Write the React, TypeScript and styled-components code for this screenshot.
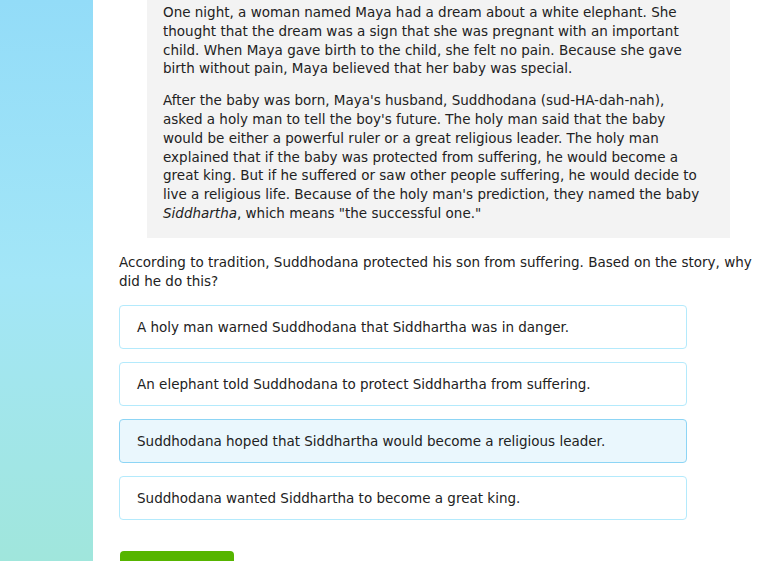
import React, { useState } from "react"
import styled, { createGlobalStyle } from "styled-components"

const GlobalStyle = createGlobalStyle`
  html, body {
    margin: 0;
    padding: 0;
    background: #fff;
    overflow: hidden;
  }
  body {
    font-family: "DejaVu Sans", Verdana, sans-serif;
    color: #222;
  }
`

const choices = [
  "A holy man warned Suddhodana that Siddhartha was in danger.",
  "An elephant told Suddhodana to protect Siddhartha from suffering.",
  "Suddhodana hoped that Siddhartha would become a religious leader.",
  "Suddhodana wanted Siddhartha to become a great king.",
]

const App = () => {
  const [picked, setPicked] = useState(2)
  return (
    <>
      <GlobalStyle />
      <Page>
        <Sidebar />
        <Main>
          <Passage>
            <p>
              One night, a woman named Maya had a dream about a white elephant. She
              thought that the dream was a sign that she was pregnant with an important
              child. When Maya gave birth to the child, she felt no pain. Because she gave
              birth without pain, Maya believed that her baby was special.
            </p>
            <p>
              After the baby was born, Maya's husband, Suddhodana (sud-HA-dah-nah),
              asked a holy man to tell the boy's future. The holy man said that the baby
              would be either a powerful ruler or a great religious leader. The holy man
              explained that if the baby was protected from suffering, he would become a
              great king. But if he suffered or saw other people suffering, he would decide to
              live a religious life. Because of the holy man's prediction, they named the baby{" "}
              <em>Siddhartha</em>, which means "the successful one."
            </p>
          </Passage>
          <Question>
            According to tradition, Suddhodana protected his son from suffering. Based on the story, why
            did he do this?
          </Question>
          <Choices>
            {choices.map((c, i) => (
              <Choice key={c} $selected={i === picked} onClick={() => setPicked(i)}>
                {c}
              </Choice>
            ))}
          </Choices>
          <SubmitButton>Submit</SubmitButton>
        </Main>
      </Page>
    </>
  )
}

const Page = styled.div`
  display: flex;
  height: 561px;
  overflow: hidden;
`

const Sidebar = styled.div`
  flex: 0 0 93px;
  background: linear-gradient(180deg, #93dcf8 0%, #a3e6f7 50%, #a0e6dc 100%);
`

const Main = styled.div`
  flex: 1;
  padding: 0 8px 0 26px;
  margin-top: -13px;
  display: flex;
  flex-direction: column;
  align-items: flex-start;
  & > * {
    flex-shrink: 0;
  }
`

const Passage = styled.div`
  margin-left: 28px;
  width: 583px;
  box-sizing: border-box;
  padding: 16px 26px 15px 16px;
  background: #f3f3f3;
  font-size: 13.5px;
  line-height: 18.8px;
  p {
    margin: 0 0 13px 0;
  }
  p:last-child {
    margin-bottom: 0;
  }
`

const Question = styled.p`
  margin: 15px 0 0 0;
  font-size: 13.5px;
  line-height: 19px;
`

const Choices = styled.div`
  display: flex;
  flex-direction: column;
  gap: 13px;
  margin-top: 14px;
  width: 568px;
`

const Choice = styled.div<{ $selected: boolean }>`
  box-sizing: border-box;
  height: 44px;
  display: flex;
  align-items: center;
  padding: 0 17px;
  border: 1px solid ${p => (p.$selected ? "#8dd5f5" : "#b4eafc")};
  border-radius: 4px;
  background: ${p => (p.$selected ? "#eaf7fd" : "#fff")};
  font-size: 13.5px;
  cursor: pointer;
`

const SubmitButton = styled.button`
  box-sizing: border-box;
  margin-top: 31px;
  margin-left: 1px;
  width: 114px;
  height: 40px;
  padding: 7px 0 13px;
  border: none;
  border-radius: 4px;
  background: #56b500;
  color: #fff;
  font-family: "DejaVu Sans", Verdana, sans-serif;
  font-size: 13.5px;
  line-height: 20px;
  cursor: pointer;
`

export default App
